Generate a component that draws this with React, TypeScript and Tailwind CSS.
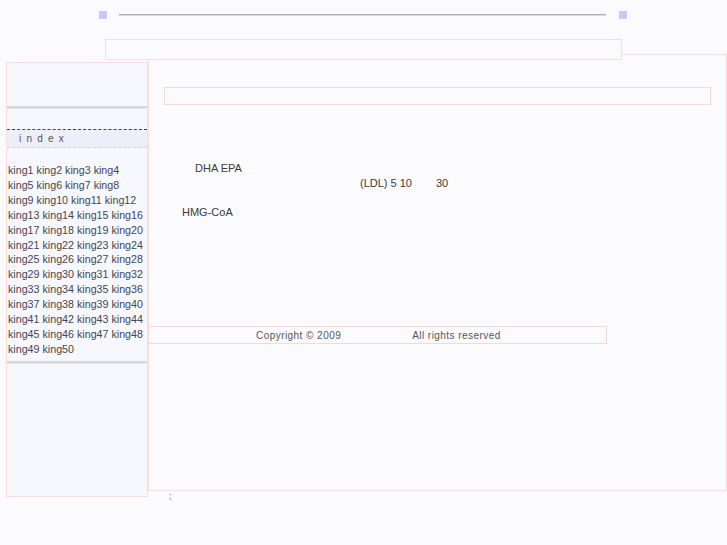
import React from 'react';

// ページ全体: 古いレイアウトの再現 (ヘッダー / サイドメニュー / 本文 / フッター)

const kings = Array.from({ length: 50 }, (_, i) => `king${i + 1}`);
const rows: string[][] = [];
for (let i = 0; i < kings.length; i += 4) rows.push(kings.slice(i, i + 4));

const Band = () => (
  <div className="h-[3px] border-t-2 border-[#d7d7dc] bg-[#e6e6ea]" />
);

const Sidebar: React.FC = () => (
  <div className="ml-[6px] mt-[8px] flex h-[435px] w-[142px] flex-col border border-[#f9dcdc] bg-[#f7f8fd]">
    <div className="h-[43px]" />
    <Band />
    <div className="h-[20px]" />
    {/* index 見出し */}
    <div className="flex h-[19px] items-center border-y border-dashed border-t-[#444] border-b-[#d4d4e4] bg-[#eeeef8] pl-[12px] text-[10px] tracking-[5.2px] text-[#555]">
      index
    </div>
    <ul className="pl-[1px] pt-[15px] text-[10.7px] leading-[14.9px] text-[#45454d]">
      {rows.map((r, i) => (
        <li key={i} className="whitespace-nowrap">
          {r.map((k, j) => (
            <React.Fragment key={k}>
              {j > 0 && ' '}
              <a href="#">{k}</a>
            </React.Fragment>
          ))}
        </li>
      ))}
    </ul>
    <div className="mt-[4px]">
      <Band />
    </div>
    <div className="flex-1" />
  </div>
);

const MainBox: React.FC = () => (
  <div className="flex flex-col">
    <div className="h-[437px] w-[579px] border border-[#f9dcdc] text-[11px] leading-[15px] text-[#3a3a3a]">
      <div className="ml-[15px] mt-[32px] h-[18px] w-[547px] border border-[#f6d8d8]" />
      <div className="mt-[56px] pl-[46px]">DHA EPA</div>
      <div className="flex pl-[211px]">
        <span>(LDL) 5 10</span>
        <span className="ml-[24px]">30</span>
      </div>
      <div className="mt-[14px] pl-[33px]">HMG-CoA</div>
      {/* フッター */}
      <div className="-ml-px mt-[106px] flex h-[18px] w-[459px] items-center border border-[#f6d8d8] pl-[107px] text-[10px] tracking-[0.45px] text-[#555]">
        <span>Copyright © 2009</span>
        <span className="ml-[71px]">All rights reserved</span>
      </div>
    </div>
    <div className="ml-[21px] text-[9px] leading-[10px] text-[#666]">;</div>
  </div>
);

const App: React.FC = () => {
  return (
    <div className="min-h-[545px] overflow-hidden bg-[#fbfbfd] font-['Liberation_Sans',Arial,sans-serif]">
      <div className="flex items-center pl-[99px] pt-[11px]">
        <div className="h-[8px] w-[8px] bg-[#c9c9f6]" />
        <div className="ml-[12px] h-[2px] w-[487px] border-b border-[#dcdcdc] bg-[#b0b0b0]" />
        <div className="ml-[13px] h-[8px] w-[8px] bg-[#c9c9f6]" />
      </div>
      <div className="relative z-10 ml-[105px] mt-[20px] h-[21px] w-[517px] border border-[#f9dcdc] bg-[#fbfbfd]" />
      <div className="-mt-[6px] flex items-start">
        <Sidebar />
        <MainBox />
      </div>
    </div>
  );
};

export default App;
